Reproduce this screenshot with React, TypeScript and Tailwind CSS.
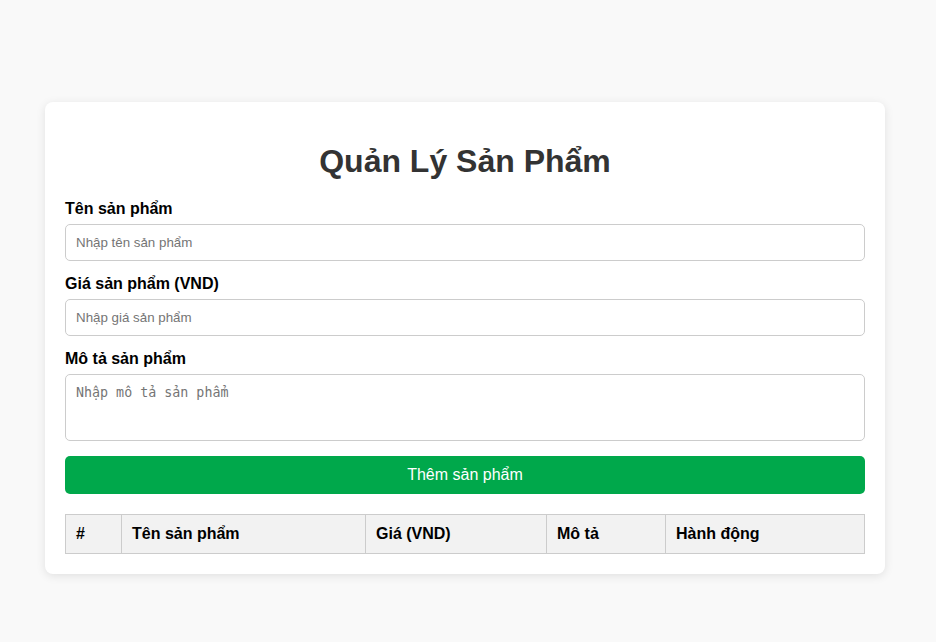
import React from 'react';

const columns = [
  { label: '#', width: 'w-[56px]' },
  { label: 'Tên sản phẩm', width: 'w-[244px]' },
  { label: 'Giá (VND)', width: 'w-[181px]' },
  { label: 'Mô tả', width: 'w-[119px]' },
  { label: 'Hành động', width: 'w-[199px]' },
];

const App: React.FC = () => {
  return (
    <div className="min-h-screen bg-[#f9f9f9] pt-[102px] pb-10 font-['Liberation_Sans',Arial,sans-serif]">
      <div className="ml-[45px] w-[840px] rounded-lg bg-white p-5 shadow-[0_2px_10px_rgba(0,0,0,0.1)]">
        <h1 className="mt-[21px] mb-[20px] text-center text-[32px] leading-[37px] font-bold text-[#333]">
          Quản Lý Sản Phẩm
        </h1>

        <div className="mb-[14px]">
          <label className="mb-[6px] block text-base leading-[18px] font-bold text-black">Tên sản phẩm</label>
          <input
            type="text"
            placeholder="Nhập tên sản phẩm"
            className="block h-[37px] w-full rounded-[5px] border border-[#ccc] px-[10px] text-[13.33px] placeholder:text-[#757575] outline-none"
          />
        </div>

        <div className="mb-[14px]">
          <label className="mb-[6px] block text-base leading-[18px] font-bold text-black">Giá sản phẩm (VND)</label>
          <input
            type="number"
            placeholder="Nhập giá sản phẩm"
            className="block h-[37px] w-full rounded-[5px] border border-[#ccc] px-[10px] text-[13.33px] placeholder:text-[#757575] outline-none"
          />
        </div>

        <div className="mb-[15px]">
          <label className="mb-[6px] block text-base leading-[18px] font-bold text-black">Mô tả sản phẩm</label>
          <textarea
            placeholder="Nhập mô tả sản phẩm"
            className="block h-[67px] w-full resize-none rounded-[5px] border border-[#ccc] p-[10px] font-['DejaVu_Sans_Mono',monospace] text-[13.33px] leading-[15px] placeholder:text-[#757575] outline-none"
          />
        </div>

        <button className="block h-[38px] w-full rounded-[5px] bg-[#00a84b] text-base text-white">
          Thêm sản phẩm
        </button>

        <table className="mt-5 w-full border-collapse">
          <thead>
            <tr className="bg-[#f2f2f2]">
              {columns.map((col) => (
                <th
                  key={col.label}
                  className={`${col.width} h-[39px] border border-[#ccc] px-[10px] text-left text-base font-bold text-black`}
                >
                  {col.label}
                </th>
              ))}
            </tr>
          </thead>
          <tbody></tbody>
        </table>
      </div>
    </div>
  );
};

export default App;
